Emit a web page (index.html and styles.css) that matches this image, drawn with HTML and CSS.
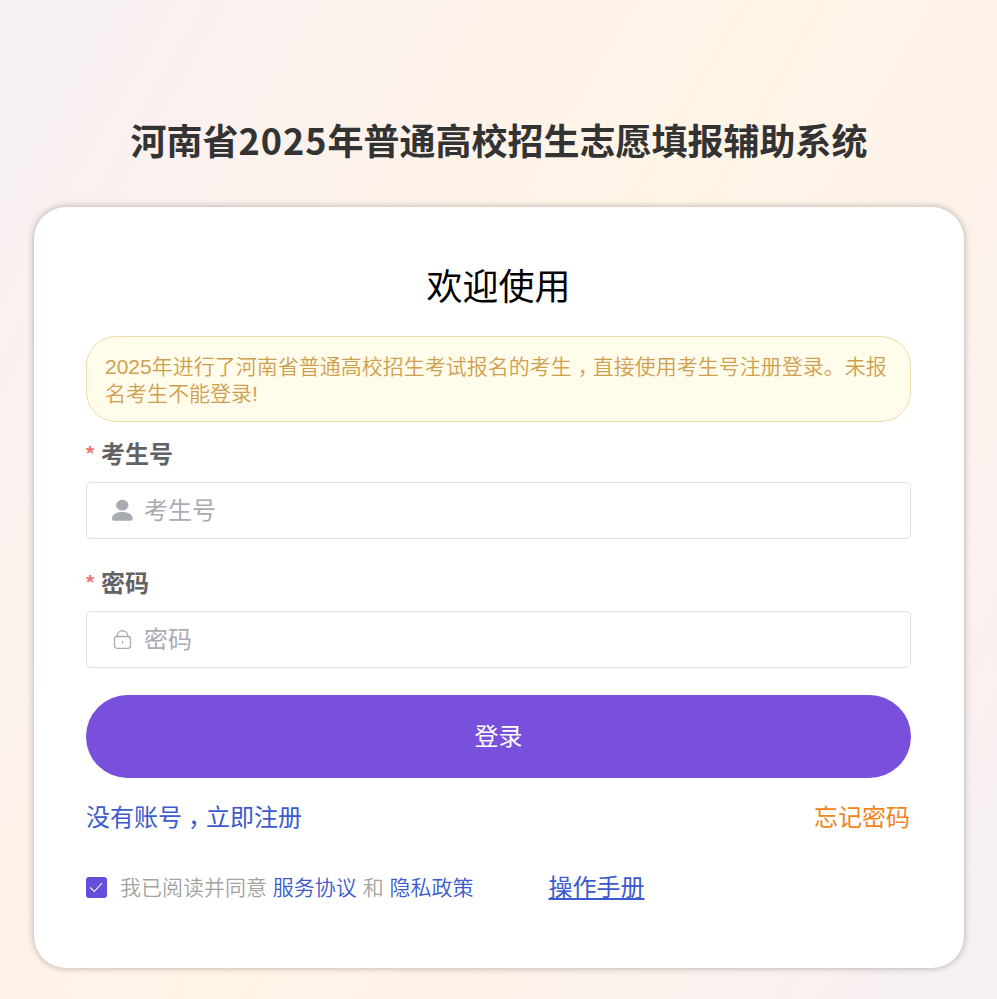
FILE: index.html
```html
<!DOCTYPE html>
<html lang="zh-CN">
<head>
  <meta charset="UTF-8" />
  <meta name="viewport" content="width=device-width, initial-scale=1.0" />
  <title>河南省2025年普通高校招生志愿填报辅助系统</title>
  <link rel="stylesheet" href="styles.css">
</head>
<body>
  <div class="login-page">
    <h1 class="title">河南省<span class="year">2025</span>年普通高校招生志愿填报辅助系统</h1>

    <div class="login-box">
      <h2 class="welcome">欢迎使用</h2>
      <div class="notice">2025年进行了河南省普通高校招生考试报名的考生<span class="comma">&#65292;</span>直接使用考生号注册登录。未报名考生不能登录!</div>

      <form class="login-form">
        <label class="form-label" for="ksh">考生号</label>
        <div class="input-wrap">
          <svg class="icon" viewBox="0 0 24 24" fill="#a8abb2">
            <ellipse cx="12.300" cy="6.2" rx="6.2" ry="5.4" />
            <path d="M1.900 19.8C1.900 15.500 6.300 12.900 12.300 12.900S22.700 15.500 22.700 19.800Q22.700 21.800 20.700 21.800H3.900Q1.900 21.800 1.900 19.800Z" />
          </svg>
          <input type="text" id="ksh" placeholder="考生号" />
        </div>

        <label class="form-label" for="pwd">密码</label>
        <div class="input-wrap">
          <svg class="icon" viewBox="0 0 24 24" fill="none" stroke="#a8abb2" stroke-width="1.3">
            <rect x="4.500" y="8.500" width="16" height="11.800" rx="2.600" />
            <path d="M7.100 8.500C7.100 0.800 17.900 0.800 17.900 8.500M12.500 13.100v2.600" />
          </svg>
          <input type="password" id="pwd" placeholder="密码" />
        </div>

        <button type="button" class="login-btn">登录</button>
      </form>

      <div class="links">
        <a class="register" href="#">没有账号<span class="comma">&#65292;</span>立即注册</a>
        <a class="forget" href="#">忘记密码</a>
      </div>

      <div class="agree">
        <span class="checkbox">
          <svg viewBox="0 0 21 21" fill="none" stroke="#fff" stroke-width="1.100">
            <path d="M4 10.300L8.300 14.500L16 6" />
          </svg>
        </span>
        <span class="agree-text">我已阅读并同意 <a href="#">服务协议</a> 和 <a href="#">隐私政策</a></span>
        <a class="manual" href="#">操作手册</a>
      </div>
    </div>
  </div>
</body>
</html>
```

FILE: styles.css
```css
* {
  box-sizing: border-box;
}
body {
  margin: 0;
  font-family: "Liberation Sans", "Noto Sans CJK SC", sans-serif;
}
a {
  color: #3a5acd;
  text-decoration: none;
}
.login-page {
  height: 999px;
  padding: 112px 33px 0 34px;
  overflow: hidden;
  background: linear-gradient(120deg, #f5f1f2 0%, #faf0ef 14%, #fff5e6 50%, #faf0ef 86%, #f5f1f2 100%);
}
.title {
  margin: 0;
  height: 95px;
  line-height: 54px;
  font-family: "Noto Sans CJK SC", sans-serif;
  font-size: 36px;
  font-weight: bold;
  color: #333;
  text-align: center;
}
.year {
  letter-spacing: 1px;
}
.login-box {
  height: 761px;
  padding: 53px 53px 0 52px;
  background-color: #fff;
  border-radius: 32px;
  box-shadow: 0 0 7px rgba(0, 0, 0, 0.3);
}
.welcome {
  margin: 0 0 20px;
  font-size: 36px;
  line-height: 56px;
  font-weight: normal;
  color: #000;
  text-align: center;
}
.notice {
  height: 86px;
  padding: 16px 18px;
  border: 1px solid #eedca8;
  border-radius: 30px;
  background-color: #fffceb;
  color: #cf9f4f;
  font-size: 21px;
  line-height: 27px;
  font-weight: 350;
}
/* full-width comma sits near the middle of its cell */
.comma {
  padding-left: 6px;
  margin-right: -6px;
}
.login-form {
  display: flex;
  flex-direction: column;
}
.form-label {
  display: flex;
  height: 60px;
  line-height: 65px;
  font-size: 24px;
  font-weight: bold;
  color: #606266;
}
.form-label::before {
  content: "*";
  width: 15px;
  line-height: 61px;
  font-size: 21px;
  color: #ee7272;
}
.input-wrap {
  display: flex;
  align-items: center;
  gap: 10px;
  height: 57px;
  margin-bottom: 12px;
  padding: 0 23px;
  border: 1px solid #dcdfe6;
  border-radius: 5px;
}
.icon {
  width: 24px;
  height: 24px;
}
.input-wrap input {
  flex: 1;
  padding: 0;
  border: none;
  outline: none;
  background: none;
  font-family: inherit;
  font-size: 24px;
}
.input-wrap input::placeholder {
  color: #a8abb2;
}
.login-btn {
  height: 83px;
  margin-top: 15px;
  padding-bottom: 5px;
  border: none;
  border-radius: 42px;
  background-color: #7950dc;
  color: #fff;
  font-family: inherit;
  font-size: 24px;
}
.links {
  display: flex;
  justify-content: space-between;
  margin-top: 22px;
  padding-right: 1px;
  font-size: 24px;
  line-height: 36px;
}
.forget {
  color: #f08519;
}
.agree {
  display: flex;
  align-items: center;
  height: 36px;
  margin-top: 33px;
}
.checkbox {
  width: 21px;
  height: 21px;
  margin-right: 13px;
  border-radius: 3px;
  background-color: #624fdb;
}
.checkbox svg {
  display: block;
}
.agree-text {
  padding-bottom: 2px;
  font-size: 21px;
  font-weight: 350;
  color: #a3a3a3;
}
.manual {
  margin-left: 75px;
  padding-bottom: 4px;
  font-size: 24px;
  text-decoration: underline;
}
```
